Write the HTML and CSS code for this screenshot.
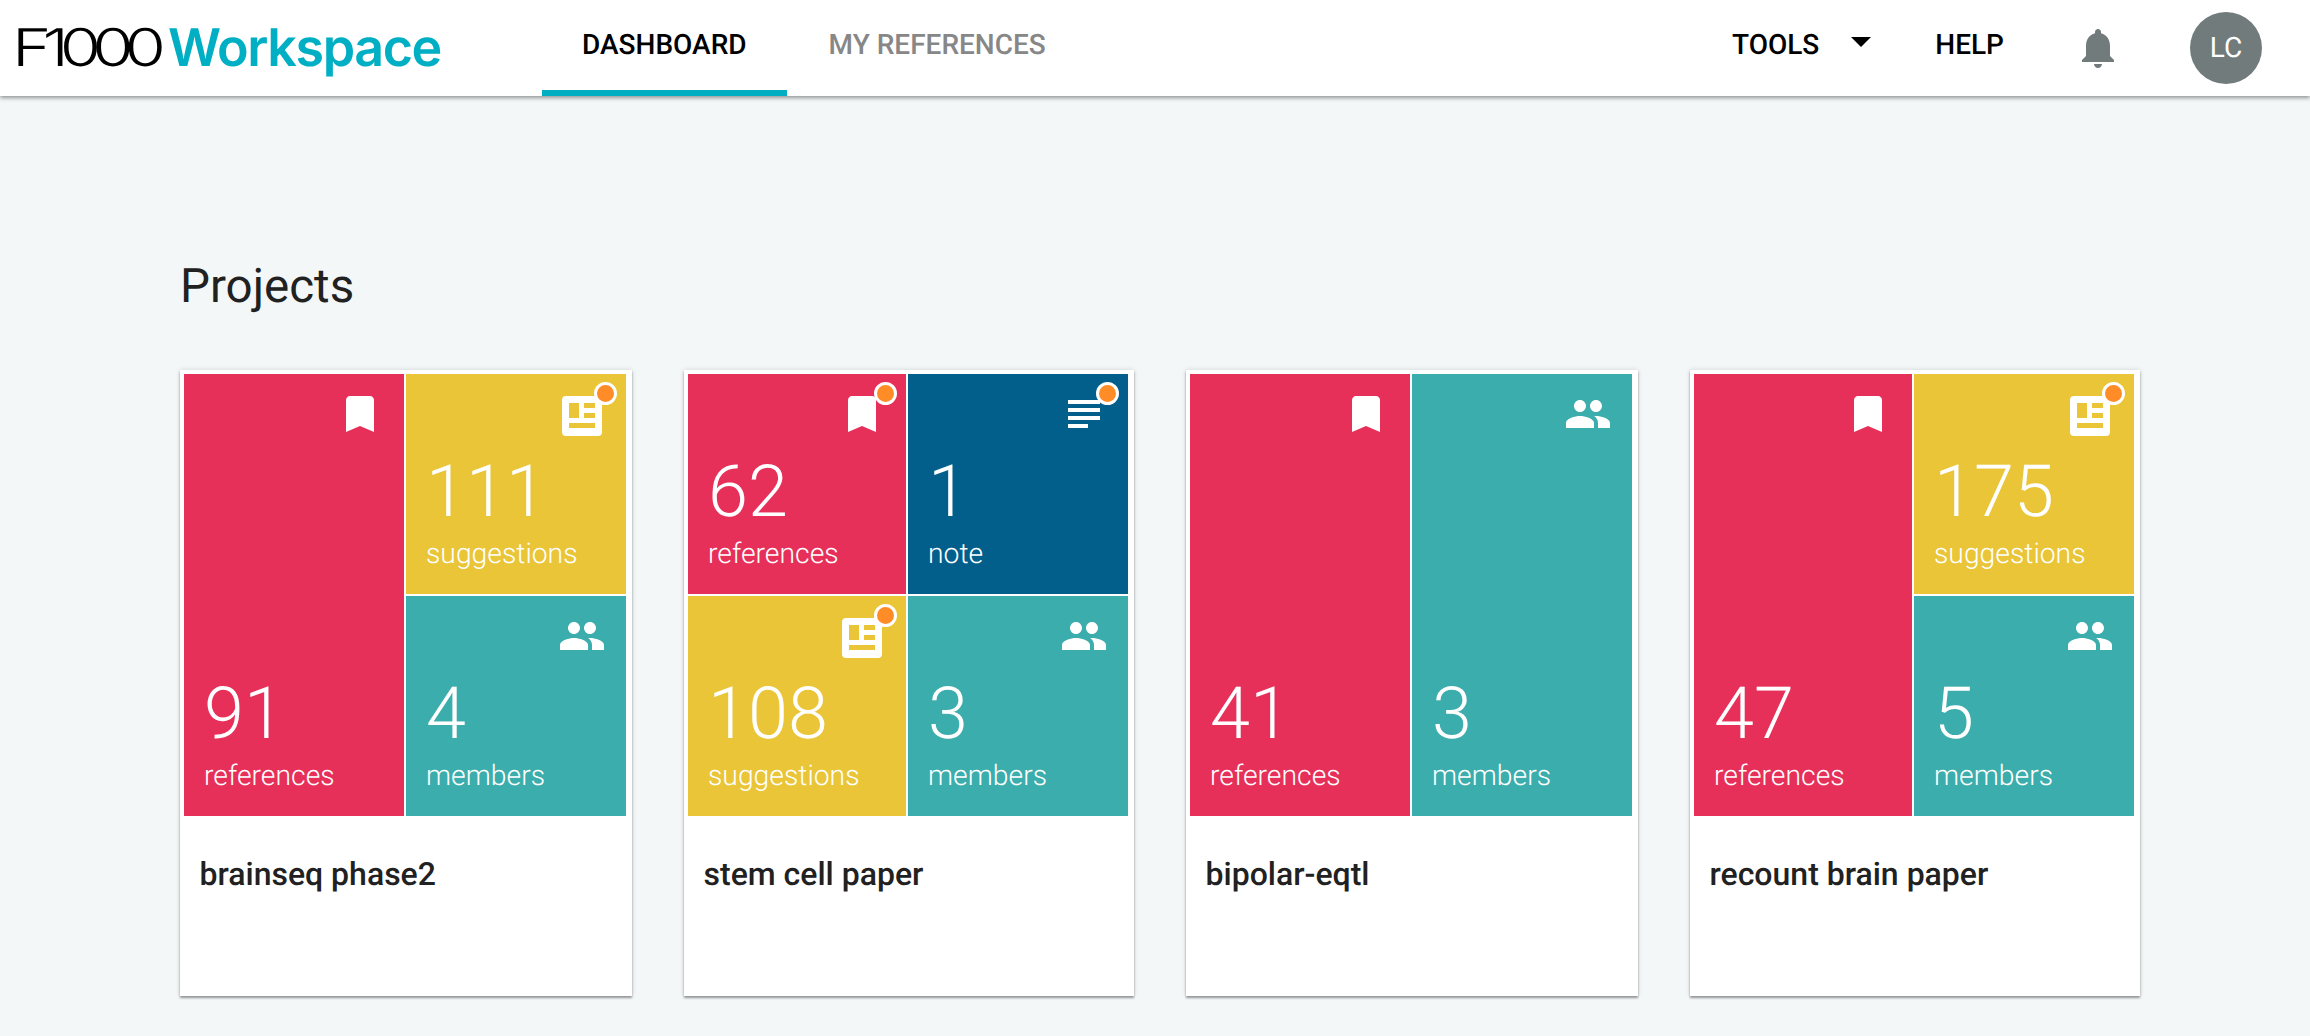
FILE: index.html
```html
<!DOCTYPE html>
<html lang="en">
<head>
    <meta charset="UTF-8">
    <meta name="viewport" content="width=device-width, initial-scale=1.0">
    <title>F1000 Workspace</title>
    <link rel="stylesheet" href="styles.css">
</head>
<body>
    <svg class="icon-defs" width="0" height="0">
        <symbol id="i-bookmark" viewBox="0 0 24 24">
            <path d="M17 3H7c-1.1 0-1.99.9-1.99 2L5 21l7-3 7 3V5c0-1.1-.9-2-2-2z"/>
        </symbol>
        <symbol id="i-people" viewBox="0 0 24 24">
            <path d="M16 11c1.66 0 2.99-1.34 2.99-3S17.66 5 16 5c-1.66 0-3 1.34-3 3s1.34 3 3 3zm-8 0c1.66 0 2.99-1.34 2.99-3S9.66 5 8 5C6.34 5 5 6.34 5 8s1.34 3 3 3zm0 2c-2.33 0-7 1.17-7 3.5V19h14v-2.5c0-2.33-4.67-3.5-7-3.5zm8 0c-.29 0-.62.02-.97.05 1.16.84 1.97 1.97 1.97 3.45V19h6v-2.5c0-2.33-4.67-3.5-7-3.5z"/>
        </symbol>
        <symbol id="i-news" viewBox="0 0 48 48">
            <path fill-rule="evenodd" d="M8 6h32a4 4 0 0 1 4 4v32a4 4 0 0 1-4 4H8a4 4 0 0 1-4-4V10a4 4 0 0 1 4-4zm3 7v15h10V13zm15 0v5h11v-5zm0 10v5h11v-5zm-15 10v5h26v-5z"/>
        </symbol>
        <symbol id="i-notes" viewBox="0 0 24 24">
            <path d="M14 17H4v2h10v-2zm6-8H4v2h16V9zM4 15h16v-2H4v2zM4 5v2h16V5H4z"/>
        </symbol>
    </svg>

    <header class="topbar">
        <a href="#" class="logo"><span class="logo-f">F1000</span><span class="logo-w">Workspace</span></a>
        <nav class="tabs">
            <a href="#" class="tab tab-active">DASHBOARD</a>
            <a href="#" class="tab">MY REFERENCES</a>
        </nav>
        <div class="top-right">
            <a href="#" class="top-link">TOOLS</a>
            <svg class="caret" width="20" height="10" viewBox="0 0 20 10"><path d="M0 0h20L10 10z"/></svg>
            <a href="#" class="top-link help-link">HELP</a>
            <svg class="bell" width="48" height="48" viewBox="0 0 24 24"><path d="M12 22c1.1 0 2-.9 2-2h-4c0 1.1.89 2 2 2zm6-6v-5c0-3.07-1.64-5.64-4.5-6.32V4c0-.83-.67-1.5-1.5-1.5s-1.5.67-1.5 1.5v.68C7.63 5.36 6 7.92 6 11v5l-2 2v1h16v-1l-2-2z"/></svg>
            <div class="avatar">LC</div>
        </div>
    </header>

    <main class="content">
        <h1 class="page-title">Projects</h1>
        <section class="projects">

            <article class="card">
                <div class="tiles">
                    <div class="tile tile-red tile-tall">
                        <svg class="tile-icon"><use href="#i-bookmark"/></svg>
                        <div class="count">91</div>
                        <div class="label">references</div>
                    </div>
                    <div class="tile tile-yellow">
                        <svg class="tile-icon"><use href="#i-news"/></svg>
                        <span class="dot"></span>
                        <div class="count">111</div>
                        <div class="label">suggestions</div>
                    </div>
                    <div class="tile tile-teal">
                        <svg class="tile-icon"><use href="#i-people"/></svg>
                        <div class="count">4</div>
                        <div class="label">members</div>
                    </div>
                </div>
                <h2 class="card-name">brainseq phase2</h2>
            </article>

            <article class="card">
                <div class="tiles">
                    <div class="tile tile-red">
                        <svg class="tile-icon"><use href="#i-bookmark"/></svg>
                        <span class="dot"></span>
                        <div class="count">62</div>
                        <div class="label">references</div>
                    </div>
                    <div class="tile tile-blue">
                        <svg class="tile-icon"><use href="#i-notes"/></svg>
                        <span class="dot"></span>
                        <div class="count">1</div>
                        <div class="label">note</div>
                    </div>
                    <div class="tile tile-yellow">
                        <svg class="tile-icon"><use href="#i-news"/></svg>
                        <span class="dot"></span>
                        <div class="count">108</div>
                        <div class="label">suggestions</div>
                    </div>
                    <div class="tile tile-teal">
                        <svg class="tile-icon"><use href="#i-people"/></svg>
                        <div class="count">3</div>
                        <div class="label">members</div>
                    </div>
                </div>
                <h2 class="card-name">stem cell paper</h2>
            </article>

            <article class="card">
                <div class="tiles">
                    <div class="tile tile-red tile-tall">
                        <svg class="tile-icon"><use href="#i-bookmark"/></svg>
                        <div class="count">41</div>
                        <div class="label">references</div>
                    </div>
                    <div class="tile tile-teal tile-tall">
                        <svg class="tile-icon"><use href="#i-people"/></svg>
                        <div class="count">3</div>
                        <div class="label">members</div>
                    </div>
                </div>
                <h2 class="card-name">bipolar-eqtl</h2>
            </article>

            <article class="card">
                <div class="tiles">
                    <div class="tile tile-red tile-tall">
                        <svg class="tile-icon"><use href="#i-bookmark"/></svg>
                        <div class="count">47</div>
                        <div class="label">references</div>
                    </div>
                    <div class="tile tile-yellow">
                        <svg class="tile-icon"><use href="#i-news"/></svg>
                        <span class="dot"></span>
                        <div class="count">175</div>
                        <div class="label">suggestions</div>
                    </div>
                    <div class="tile tile-teal">
                        <svg class="tile-icon"><use href="#i-people"/></svg>
                        <div class="count">5</div>
                        <div class="label">members</div>
                    </div>
                </div>
                <h2 class="card-name">recount brain paper</h2>
            </article>

        </section>
    </main>
</body>
</html>
```

FILE: styles.css
```css
html, body {
    height: 100%;
}
body {
    font-family: Roboto, "Liberation Sans", sans-serif;
    margin: 0;
    padding: 0;
    background-color: #f3f7f8;
    color: #212121;
    overflow: hidden;
    text-rendering: geometricPrecision;
}
a {
    text-decoration: none;
}
.icon-defs {
    position: absolute;
}

/* top bar */
.topbar {
    display: flex;
    align-items: center;
    height: 96px;
    background-color: #fff;
    box-shadow: 0 2px 4px rgba(0, 0, 0, 0.4);
}
.logo {
    display: flex;
    align-items: baseline;
    width: 530px;
    padding-left: 12px;
    height: 96px;
    line-height: 96px;
    font-family: Inter, sans-serif;
    font-size: 52px;
    white-space: nowrap;
}
.logo-f {
    display: inline-block;
    width: 156px;
    color: #000;
    font-weight: 300;
    letter-spacing: -7px;
    transform: scaleX(1.29);
    transform-origin: left;
}
.logo-w {
    color: #00afc4;
    font-weight: 600;
    letter-spacing: -1.4px;
}
.tabs {
    display: flex;
    gap: 2px;
}
.tab {
    display: block;
    height: 90px;
    line-height: 90px;
    padding: 0 40px;
    font-size: 28px;
    font-weight: 500;
    color: #878787;
    border-bottom: 6px solid transparent;
}
.tab-active {
    color: #000;
    border-bottom-color: #00adc1;
}
.top-right {
    display: flex;
    align-items: center;
    margin-left: auto;
    padding-right: 48px;
}
.top-link {
    font-size: 28px;
    font-weight: 500;
    color: #000;
    line-height: 84px;
    margin-bottom: 6px;
}
.caret {
    margin: 0 64px 12px 32px;
}
.help-link {
    margin-right: 70px;
}
.bell {
    fill: #717b7b;
    margin-right: 68px;
}
.avatar {
    width: 72px;
    height: 72px;
    border-radius: 50%;
    background-color: #717b7b;
    color: #fff;
    font-size: 28px;
    line-height: 72px;
    text-align: center;
}

/* projects */
.content {
    padding: 0 0 0 180px;
}
.page-title {
    margin: 0;
    padding-top: 154px;
    height: 120px;
    font-size: 47.5px;
    font-weight: 400;
    line-height: 72px;
}
.projects {
    display: grid;
    grid-template-columns: 452px 450px 452px 450px;
    column-gap: 52px;
}
.card {
    height: 626px;
    box-sizing: border-box;
    padding: 4px 6px 0 4px;
    background-color: #fff;
    box-shadow: 0 2px 2px rgba(0, 0, 0, 0.35), 0 0 5px rgba(0, 0, 0, 0.15);
}
.tiles {
    display: grid;
    grid-template-columns: 1fr 220px;
    grid-template-rows: 220px 220px;
    gap: 2px;
}
.tile {
    position: relative;
    display: flex;
    flex-direction: column;
    padding-left: 20px;
    color: #fff;
    overflow: hidden;
}
.tile-tall {
    grid-row: span 2;
}
.tile-red {
    background-color: #e73059;
}
.tile-yellow {
    background-color: #e9c537;
}
.tile-teal {
    background-color: #3aadac;
}
.tile-blue {
    background-color: #025f8c;
}
.tile-icon {
    width: 48px;
    height: 48px;
    flex: none;
    fill: #fff;
    align-self: flex-end;
    margin: 16px 20px auto 0;
}
.dot {
    position: absolute;
    top: 8px;
    right: 9px;
    width: 17px;
    height: 17px;
    border: 3px solid #fff;
    border-radius: 50%;
    background-color: #ff8c26;
}
.count {
    font-size: 72px;
    font-weight: 300;
    line-height: 76px;
    margin-bottom: 6px;
}
.label {
    font-size: 28.3px;
    font-weight: 300;
    line-height: 36px;
    margin-bottom: 22px;
}
.card-name {
    margin: 38px 0 0 15.5px;
    font-size: 32px;
    font-weight: 500;
    line-height: 40px;
}
```
